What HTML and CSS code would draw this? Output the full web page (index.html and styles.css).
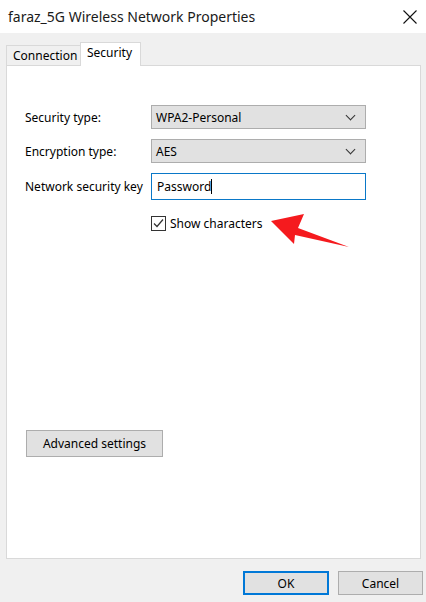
FILE: index.html
```html
<!doctype html>
<html lang="en">
    <head>
        <title>faraz_5G Wireless Network Properties</title>
        <link rel="stylesheet" href="styles.css">
    </head>
    <body>
        <div class="titlebar">
            <span class="title">faraz_5G Wireless Network Properties</span>
            <svg class="close" width="14" height="14" viewBox="0 0 14 14">
                <path d="M0.5 0.5 L13.5 13.5 M13.5 0.5 L0.5 13.5" stroke="#111" stroke-width="1.1" fill="none"/>
            </svg>
        </div>
        <div class="tabs">
            <div class="tab">Connection</div>
            <div class="tab active">Security</div>
        </div>
        <div class="panel">
            <div class="form">
                <label>Security type:</label>
                <div class="select">WPA2-Personal <span class="chev"></span></div>
                <label>Encryption type:</label>
                <div class="select">AES <span class="chev"></span></div>
                <label>Network security key</label>
                <div class="textbox">Password<span class="caret"></span></div>
                <span></span>
                <div class="check">
                    <svg class="box" width="15" height="15" viewBox="0 0 15 15">
                        <rect x="0.5" y="0.5" width="14" height="14" fill="#fff" stroke="#333"/>
                        <path d="M3 7.5 L6 10.5 L12 3.5" stroke="#333" stroke-width="1.2" fill="none"/>
                    </svg>
                    Show characters
                </div>
            </div>
            <div class="advanced">
                <div class="button">Advanced settings</div>
            </div>
            <!-- annotation arrow over the dialog -->
            <svg class="arrow" width="90" height="40" viewBox="0 0 90 40">
                <polygon points="2,13 35,6 29,20 80,39 26,27 25,36" fill="#f51a1e"/>
            </svg>
        </div>
        <div class="footer">
            <div class="button ok">OK</div>
            <div class="button">Cancel</div>
        </div>
    </body>
</html>
```

FILE: styles.css
```css
body {
    margin: 0;
    background: #f0f0f0;
    font-family: "Noto Sans", "Open Sans", sans-serif;
    font-size: 12px;
    color: #000;
    height: 602px;
    overflow: hidden;
}
.titlebar {
    height: 33px;
    background: #fff;
    display: flex;
    align-items: center;
    justify-content: space-between;
    padding: 0 9px 0 8px;
}
.title {
    font-size: 14px;
    color: #1a1a1a;
}
.tabs {
    display: flex;
    align-items: flex-end;
    padding: 9px 0 0 6px;
    height: 23px;
}
.tab {
    height: 20px;
    line-height: 20px;
    padding: 0 6px;
    border: 1px solid #d9d9d9;
    border-bottom: none;
    background: #f0f0f0;
    box-sizing: border-box;
    width: 75px;
}
.tab.active {
    position: relative;
    height: 24px;
    line-height: 20px;
    width: 61px;
    margin-bottom: -1px;
    margin-left: -1px;
    background: #fff;
    z-index: 1;
}
.panel {
    position: relative;
    margin: 0 5px 0 6px;
    height: 494px;
    background: #fff;
    border: 1px solid #d9d9d9;
    box-sizing: border-box;
    padding: 39px 0 0 18px;
}
.form {
    display: grid;
    grid-template-columns: 126px 215px;
    row-gap: 10px;
    align-items: center;
}
.select {
    height: 24px;
    background: #e1e1e1;
    border: 1px solid #adadad;
    box-sizing: border-box;
    display: flex;
    align-items: center;
    justify-content: space-between;
    padding: 0 11px 0 4px;
}
.chev {
    width: 6px;
    height: 6px;
    border-right: 1px solid #333;
    border-bottom: 1px solid #333;
    transform: rotate(45deg);
    margin-top: -4px;
}
.textbox {
    height: 27px;
    border: 1px solid #0a78c8;
    box-sizing: border-box;
    display: flex;
    align-items: center;
    padding-left: 5px;
}
.caret {
    width: 1px;
    height: 15px;
    background: #000;
}
.check {
    display: flex;
    align-items: center;
    gap: 4px;
    margin-top: 5px;
}
.advanced {
    margin-top: 198px;
    margin-left: 1px;
}
.button {
    height: 27px;
    width: 137px;
    background: #e1e1e1;
    border: 1px solid #adadad;
    box-sizing: border-box;
    display: flex;
    align-items: center;
    justify-content: center;
}
.footer {
    display: flex;
    justify-content: flex-end;
    gap: 9px;
    padding: 12px 3px 0 0;
}
.footer .button {
    width: 85px;
    height: 24px;
}
.footer .ok {
    width: 86px;
    border: 2px solid #0078d7;
}
.arrow {
    position: absolute;
    left: 262px;
    top: 142px;
}
```
